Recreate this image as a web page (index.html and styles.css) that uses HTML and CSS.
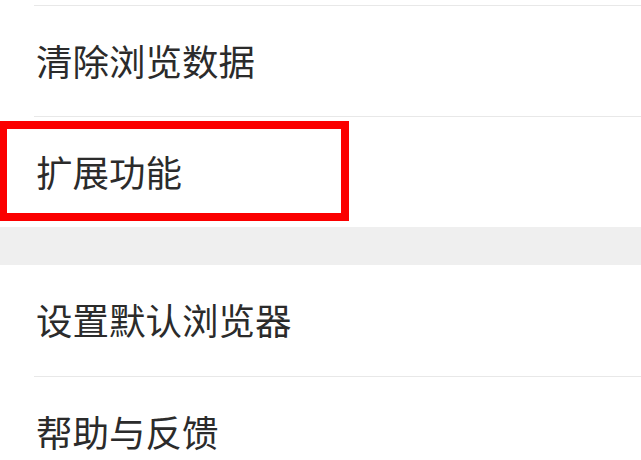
FILE: index.html
```html
<!DOCTYPE html>
<html lang="zh-CN">
<head>
<meta charset="utf-8">
<title>设置</title>
<link rel="stylesheet" href="styles.css">
</head>
<body>
<div class="page">
  <div class="spacer"></div>
  <section class="group">
    <div class="row">清除浏览数据</div>
    <div class="row highlighted">扩展功能<span class="mark"></span></div>
  </section>
  <div class="gap"></div>
  <section class="group">
    <div class="row first">设置默认浏览器</div>
    <div class="row">帮助与反馈</div>
  </section>
</div>
</body>
</html>
```

FILE: styles.css
```css
html, body {
  margin: 0;
  padding: 0;
  background: #ffffff;
}
.page {
  width: 641px;
  height: 460px;
  overflow: hidden;
  font-family: "Noto Sans CJK SC", "Noto Sans", sans-serif;
  color: #2b2b2b;
}
.spacer {
  height: 5px;
}
.group {
  background: #ffffff;
}
.row {
  position: relative;
  margin-left: 34px;
  padding-left: 2px;
  height: 110px;
  border-top: 1px solid #e8e8e8;
  display: flex;
  align-items: center;
  font-size: 36.5px;
  line-height: 1;
  white-space: nowrap;
}
.row.first {
  border-top: none;
  height: 111px;
}
.gap {
  height: 38px;
  background: #efefef;
}
.mark {
  position: absolute;
  left: -35px;
  top: 4px;
  width: 334px;
  height: 84px;
  border: 8px solid #fb0000;
}
```
